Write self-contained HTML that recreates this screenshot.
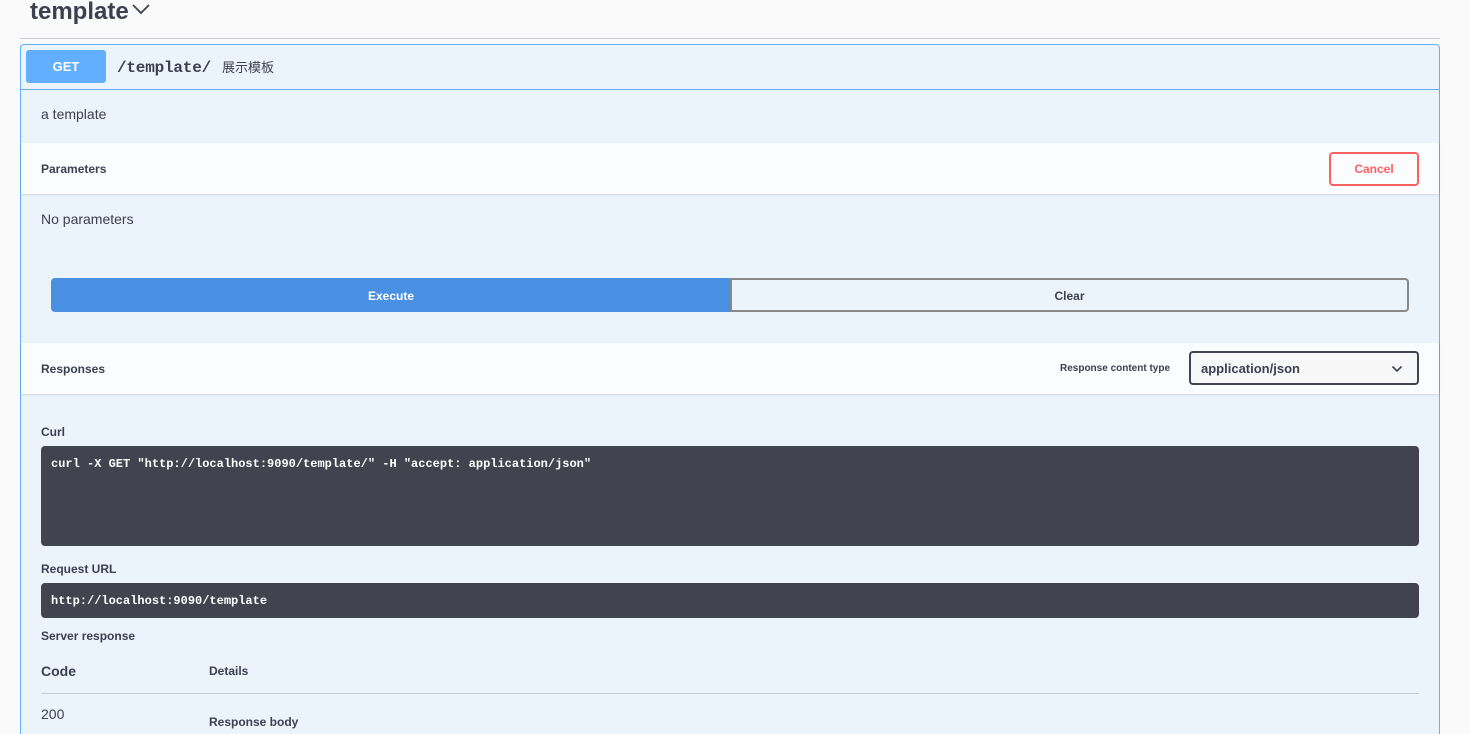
<!DOCTYPE html>
<html style="width:1470px;height:734px;overflow:hidden"><head><meta charset="utf-8"><style>
*{margin:0;padding:0;box-sizing:border-box}
body{width:1470px;height:734px;overflow:hidden;background:#fafafa;font-family:"Liberation Sans","Noto Sans CJK SC",sans-serif;color:#3b4151;position:relative}
.a{position:absolute}
.b{font-weight:bold}
.mono{font-family:"Liberation Mono","DejaVu Sans Mono",monospace}
</style></head><body>
<div class="a b" style="left:30px;top:-3px;font-size:24px;line-height:30px">template</div>
<svg class="a" style="left:131px;top:2px" width="20" height="14" viewBox="0 0 20 14"><path d="M2 3l8 8 8-8" fill="none" stroke="#3b4151" stroke-width="1.8"/></svg>
<div class="a" style="left:20px;top:38px;width:1420px;height:1px;background:#c8ccd4"></div>
<div class="a" style="left:20px;top:44px;width:1420px;height:720px;border:1px solid #61affe;border-radius:4px;background:#ebf3fb"></div>
<div class="a" style="left:21px;top:89px;width:1418px;height:1px;background:#61affe"></div>
<div class="a b" style="left:26px;top:50px;width:80px;height:33px;background:#61affe;border-radius:3px;color:#fff;font-size:13px;line-height:33px;text-align:center">GET</div>
<div class="a b mono" style="left:117px;top:58px;font-size:16px;line-height:20px;letter-spacing:-0.2px">/template/</div>
<div class="a" style="left:222px;top:59px;font-size:13px;line-height:18px;color:#3b4151">展示模板</div>
<div class="a" style="left:41px;top:105px;font-size:14px;line-height:18px">a template</div>
<div class="a" style="left:21px;top:143px;width:1418px;height:51px;background:#fafcfe;box-shadow:0 1px 2px rgba(0,0,0,.12)"></div>
<div class="a b" style="left:41px;top:162px;font-size:12px;line-height:15px">Parameters</div>
<div class="a b" style="left:1329px;top:152px;width:90px;height:34px;border:2px solid #ff6060;border-radius:4px;color:#ff6060;font-size:12px;line-height:30px;text-align:center;background:transparent">Cancel</div>
<div class="a" style="left:41px;top:210px;font-size:14px;line-height:18px">No parameters</div>
<div class="a b" style="left:51px;top:278px;width:680px;height:34px;background:#4990e2;border-radius:4px 0 0 4px;color:#fff;font-size:12px;line-height:36px;text-align:center">Execute</div>
<div class="a b" style="left:730px;top:278px;width:679px;height:34px;border:2px solid #888;border-radius:0 4px 4px 0;font-size:12px;line-height:32px;text-align:center">Clear</div>
<div class="a" style="left:21px;top:343px;width:1418px;height:51px;background:#fafcfe;box-shadow:0 1px 2px rgba(0,0,0,.12)"></div>
<div class="a b" style="left:41px;top:362px;font-size:12px;line-height:15px">Responses</div>
<div class="a b" style="left:1060px;top:362px;font-size:10px;line-height:14px">Response content type</div>
<div class="a b" style="left:1189px;top:351px;width:230px;height:34px;border:2px solid #41444e;border-radius:4px;background:#f7f7f7;font-size:13px;line-height:32px;padding-left:10px">application/json</div>
<svg class="a" style="left:1391px;top:365px" width="12" height="8" viewBox="0 0 12 8"><path d="M1.5 1.5l4.5 4.5 4.5-4.5" fill="none" stroke="#3b4151" stroke-width="1.6"/></svg>
<div class="a b" style="left:41px;top:425px;font-size:12px;line-height:15px">Curl</div>
<div class="a" style="left:41px;top:446px;width:1378px;height:100px;background:#41444e;border-radius:4px"></div>
<div class="a b mono" style="left:51px;top:457px;font-size:12px;line-height:15px;color:#fff">curl -X GET "http://localhost:9090/template/" -H "accept: application/json"</div>
<div class="a b" style="left:41px;top:562px;font-size:12px;line-height:15px">Request URL</div>
<div class="a" style="left:41px;top:583px;width:1378px;height:35px;background:#41444e;border-radius:4px"></div>
<div class="a b mono" style="left:51px;top:594px;font-size:12px;line-height:15px;color:#fff">http://localhost:9090/template</div>
<div class="a b" style="left:41px;top:629px;font-size:12px;line-height:15px">Server response</div>
<div class="a b" style="left:41px;top:662px;font-size:14px;line-height:18px">Code</div>
<div class="a b" style="left:209px;top:664px;font-size:12px;line-height:15px">Details</div>
<div class="a" style="left:41px;top:693px;width:1378px;height:1px;background:#c6ccd6"></div>
<div class="a" style="left:41px;top:705px;font-size:14px;line-height:18px">200</div>
<div class="a b" style="left:209px;top:715px;font-size:12px;line-height:15px">Response body</div>
</body></html>
